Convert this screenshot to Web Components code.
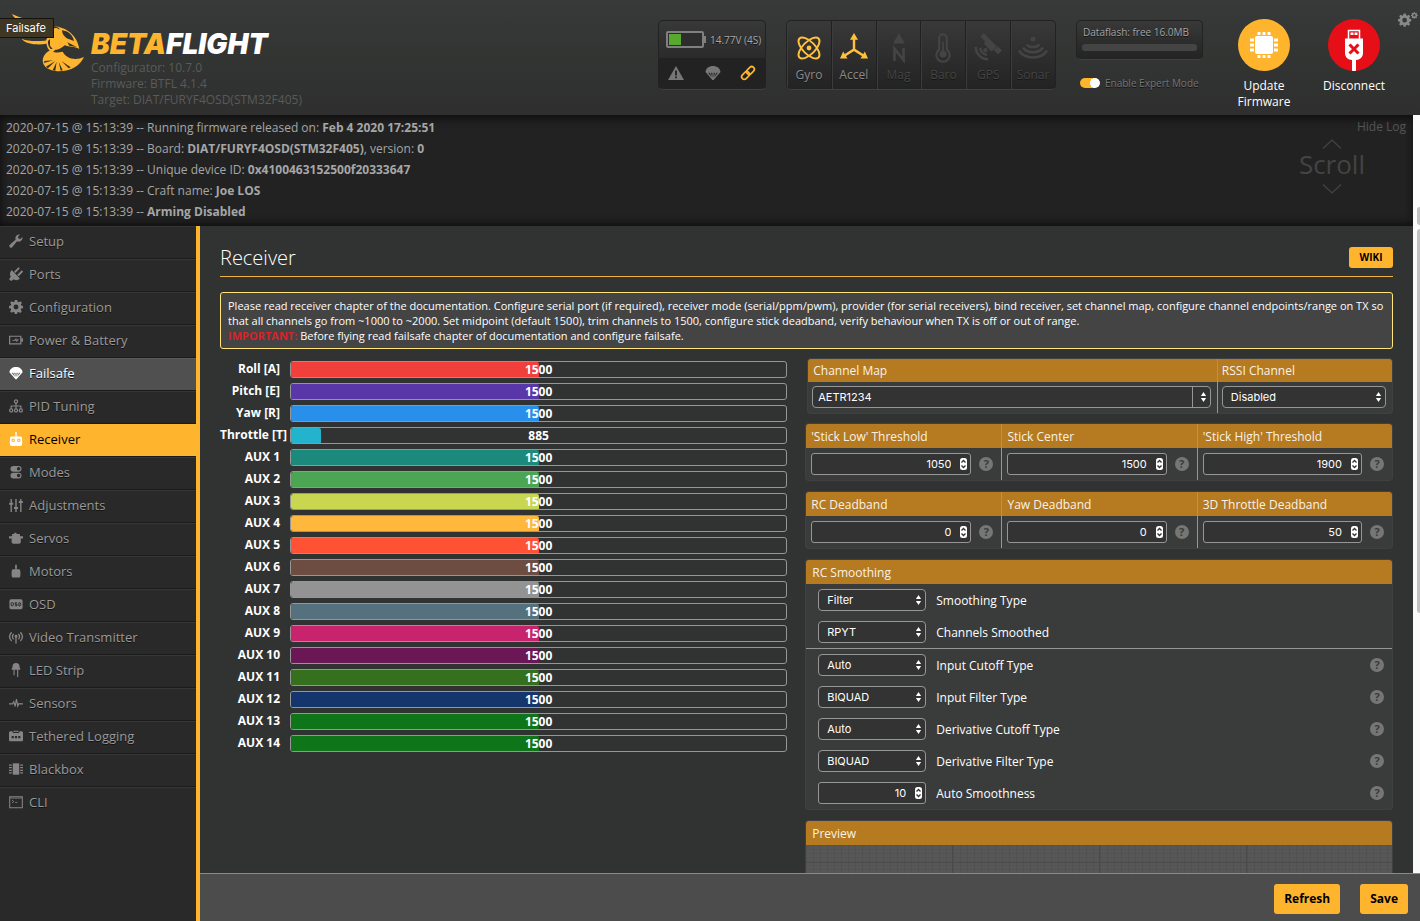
<!DOCTYPE html>
<html lang="en">
<head>
<meta charset="utf-8">
<title>Betaflight Configurator</title>
<style>
  html, body { margin: 0; height: 100%; }
  body {
    font-family: "Open Sans", "Liberation Sans", sans-serif;
    font-size: 12px;
    color: #fff;
    background: #313332;
    overflow: hidden;
    --accent: #ffb42e;
    --line: #969696;
  }
</style>
</head>
<body>
<bf-app>
  <bf-header slot="header"></bf-header>

  <bf-log slot="log">
    <p>2020-07-15 @ 15:13:39 -- Running firmware released on: <b>Feb 4 2020 17:25:51</b></p>
    <p>2020-07-15 @ 15:13:39 -- Board: <b>DIAT/FURYF4OSD(STM32F405)</b>, version: <b>0</b></p>
    <p>2020-07-15 @ 15:13:39 -- Unique device ID: <b>0x4100463152500f20333647</b></p>
    <p>2020-07-15 @ 15:13:39 -- Craft name: <b>Joe LOS</b></p>
    <p>2020-07-15 @ 15:13:39 -- <b>Arming Disabled</b></p>
  </bf-log>

  <bf-tabs slot="tabs" id="tabs"></bf-tabs>

  <bf-page slot="content" heading="Receiver">
    <bf-note slot="note">
      Please read receiver chapter of the documentation. Configure serial port (if required), receiver mode (serial/ppm/pwm), provider (for serial receivers), bind receiver, set channel map, configure channel endpoints/range on TX so that all channels go from ~1000 to ~2000. Set midpoint (default 1500), trim channels to 1500, configure stick deadband, verify behaviour when TX is off or out of range.<br>
      <b>IMPORTANT:</b> Before flying read failsafe chapter of documentation and configure failsafe.
    </bf-note>

    <div slot="left" id="channels"></div>

    <bf-panel slot="right" columns="7fr 3fr" class="map">
      <bf-cell heading="Channel Map" kind="combo" value="AETR1234"></bf-cell>
      <bf-cell heading="RSSI Channel" kind="select" value="Disabled"></bf-cell>
    </bf-panel>
    <bf-panel slot="right" columns="1fr 1fr 1fr">
      <bf-cell heading="'Stick Low' Threshold" kind="number" value="1050" help></bf-cell>
      <bf-cell heading="Stick Center" kind="number" value="1500" help></bf-cell>
      <bf-cell heading="'Stick High' Threshold" kind="number" value="1900" help></bf-cell>
    </bf-panel>
    <bf-panel slot="right" columns="1fr 1fr 1fr">
      <bf-cell heading="RC Deadband" kind="number" value="0" help></bf-cell>
      <bf-cell heading="Yaw Deadband" kind="number" value="0" help></bf-cell>
      <bf-cell heading="3D Throttle Deadband" kind="number" value="50" help></bf-cell>
    </bf-panel>
    <bf-panel slot="right" heading="RC Smoothing">
      <bf-setting kind="select" value="Filter" label="Smoothing Type"></bf-setting>
      <bf-setting kind="select" value="RPYT" label="Channels Smoothed"></bf-setting>
      <bf-setting kind="select" value="Auto" label="Input Cutoff Type" help divided></bf-setting>
      <bf-setting kind="select" value="BIQUAD" label="Input Filter Type" help></bf-setting>
      <bf-setting kind="select" value="Auto" label="Derivative Cutoff Type" help></bf-setting>
      <bf-setting kind="select" value="BIQUAD" label="Derivative Filter Type" help></bf-setting>
      <bf-setting kind="number" value="10" label="Auto Smoothness" help></bf-setting>
    </bf-panel>
    <bf-panel slot="right" heading="Preview">
      <bf-preview></bf-preview>
    </bf-panel>
  </bf-page>

  <bf-scrollbar slot="scroll"></bf-scrollbar>

  <bf-toolbar slot="toolbar">
    <bf-button>Refresh</bf-button>
    <bf-button>Save</bf-button>
  </bf-toolbar>

  <bf-tooltip slot="tooltip">Failsafe</bf-tooltip>
</bf-app>

<script>
// 16x16 icons, drawn in currentColor
const icons = {
  wrench: '<path fill="currentColor" d="M15.400 3.200a4.600 4.600 0 0 1-6.200 5.200L3.600 15a1.900 1.900 0 0 1-2.700-2.700L7.500 6.700A4.600 4.600 0 0 1 12.700.6L10.300 3l.5 2.200 2.200.5z"/>',
  plug: '<path fill="currentColor" d="M3 3.500l9.500 9.500-2 1.500c-1.500.9-3.600.7-5-.4l-3 2L0 14l2-3C.9 9.500.9 7.500 1.500 6z"/><path stroke="currentColor" stroke-width="2.200" stroke-linecap="round" d="M7 5.500L11 1.500M10.800 9.200L14.800 5.200"/>',
  gear: '<path fill="currentColor" fill-rule="evenodd" d="M6.700 0h2.600l.5 2.100 1.300.6L13 1.500 14.700 3.300 13.500 5.100l.5 1.300 2 .4v2.500l-2 .5-.6 1.300 1.200 1.900-1.800 1.800-1.900-1.200-1.300.5L9.300 16H6.700l-.5-2-1.300-.5L3 14.700 1.300 13l1.200-1.900L2 9.800 0 9.300V6.800l2-.4.6-1.300L1.400 3.200 3.100 1.500 5 2.700l1.200-.6zM8 5.200a2.800 2.800 0 1 0 0 5.600 2.800 2.800 0 0 0 0-5.600z"/>',
  battery: '<path fill="none" stroke="currentColor" stroke-width="1.400" d="M.7 3.700h12.800v8.600H.7z"/><path fill="currentColor" d="M14 6h2v4h-2zM3 8.500l3-.5 2.500-2.500-.3 2L11.500 7 8.500 10.500l-.2-2L5 9z"/>',
  parachute: '<path fill="currentColor" fill-rule="evenodd" d="M.5 7C.8 3.300 4 1 8 1s7.200 2.300 7.500 6L8.600 15H7.400zM3.300 8l3.500 4.500L4.900 8C4.500 7.600 3.700 7.600 3.300 8zM6 8l1.400 4.500V8C7 7.500 6.400 7.500 6 8zM8.600 8v4.500L10 8c-.4-.5-1-.5-1.400 0zM11.200 8l-2 4.500L12.700 8c-.4-.4-1.100-.4-1.500 0z"/>',
  tree: '<g fill="none" stroke="currentColor" stroke-width="1.400"><circle cx="8" cy="2.800" r="1.800"/><circle cx="2.500" cy="13" r="1.800"/><circle cx="8" cy="13" r="1.800"/><circle cx="13.500" cy="13" r="1.800"/><path d="M8 4.600v6.600M2.500 11.200V8h11v3.200"/></g>',
  receiver: '<path fill="currentColor" fill-rule="evenodd" d="M7.200 0h1.600v5H13a2 2 0 0 1 2 2v7a2 2 0 0 1-2 2H3a2 2 0 0 1-2-2V7a2 2 0 0 1 2-2h4.200zM4.800 7.500a2 2 0 1 0 0 4 2 2 0 0 0 0-4zm6.400 0a2 2 0 1 0 0 4 2 2 0 0 0 0-4z"/><circle cx="4.800" cy="9.500" r=".9" fill="currentColor"/><circle cx="11.200" cy="9.500" r=".9" fill="currentColor"/>',
  modes: '<path fill="currentColor" fill-rule="evenodd" d="M5 1h6a3.300 3.300 0 0 1 0 6.600H5A3.300 3.300 0 0 1 5 1zm6 1.300a2 2 0 1 0 0 4 2 2 0 0 0 0-4zM5 8.800h6a3.300 3.300 0 0 1 0 6.600H5a3.300 3.300 0 0 1 0-6.600zm6 1.300a2 2 0 1 0 0 4 2 2 0 0 0 0-4z"/>',
  sliders: '<path stroke="currentColor" stroke-width="1.600" d="M2.500 1v15M8 1v15M13.500 1v15"/><path stroke="currentColor" stroke-width="2.200" d="M.2 6.500h4.600M5.700 11.500h4.600M11.200 4.500h4.600"/>',
  servo: '<path fill="currentColor" d="M3.500 3.500h2.200L6.300 2h2l.6 1.500h3.600V6H16v2.500h-2.500V13L12 14.500H4.500L3 13V8.500H0V6h3.500z"/>',
  motor: '<path fill="currentColor" d="M8 0c1 1.500 1.500 3 .8 4.800V6H12l1 2v6l-1 1.500H4L3 14V8l1-2h3.200V4.800C6.500 3 7 1.500 8 0z"/>',
  osd: '<rect x=".5" y="2.500" width="15" height="11.500" rx="2" fill="currentColor"/><g fill="none" stroke="#292929" stroke-width="1.100"><rect x="2.400" y="6.500" width="2.600" height="3.600" rx="1"/><path d="M9.200 6.600H7v1.700h2.200v1.800H6.800M11.300 6.500v3.700h1c1.500 0 1.500-3.700 0-3.700z"/></g>',
  antenna: '<g fill="none" stroke="currentColor" stroke-width="1.500"><path d="M3 2.500C.2 5.500.2 9.500 3 12.500M13 2.500c2.800 3 2.800 7 0 10M5.300 4.500C3.600 6.300 3.600 8.700 5.300 10.500M10.700 4.500c1.700 1.800 1.700 4.200 0 6M8 8v7.500"/></g><circle cx="8" cy="7" r="1.600" fill="currentColor"/>',
  led: '<path fill="currentColor" d="M4 5.500V4a4 4 0 0 1 8 0v1.500h.8v2.200H3.200V5.500z"/><path stroke="currentColor" stroke-width="1.300" d="M5.800 7.500v6.500M9.900 7.500V16"/>',
  pulse: '<path fill="none" stroke="currentColor" stroke-width="1.300" d="M0 9h4l1.500-2.500L7 12 8.500 3.500 10 11.500 11.300 8.500 12.500 9H16"/>',
  logger: '<path fill="currentColor" fill-rule="evenodd" d="M1 2.500h2.500l1.500 2h6l1.500-2H15l1 1.500v9l-1 1H1l-1-1V4zM3 8v2.500h2.500V8zm3.800 0v2.500h2.400V8zm3.700 0v2.500H13V8z"/><path fill="currentColor" d="M5 2h6v1.300H5z"/>',
  chip: '<path fill="currentColor" d="M4.300 1.500h7.400v13H4.300z"/><path stroke="currentColor" stroke-width="1.300" d="M0 3.500h3.200M0 6.500h3.200M0 9.500h3.200M0 12.500h3.200M12.800 3.500H16M12.800 6.500H16M12.800 9.500H16M12.800 12.500H16"/>',
  cli: '<path fill="none" stroke="currentColor" stroke-width="1.200" d="M.8 2h14.400v12.500H.8z"/><path stroke="currentColor" d="M1 3.500h14M7 8.500h2.500"/><path fill="none" stroke="currentColor" d="M3.500 6l2 1.500-2 1.500"/>',
  warning: '<path fill="currentColor" fill-rule="evenodd" d="M8 1l8 14H0zM7.100 5.500v5h1.800v-5zm0 6v1.800h1.800v-1.800z"/>',
  link: '<g fill="none" stroke="currentColor" stroke-width="1.900" transform="rotate(-45 8 8)"><rect x="-1" y="5" width="10" height="6" rx="3"/><rect x="7" y="5" width="10" height="6" rx="3"/></g>',
  gyro: '<g fill="none" stroke="currentColor" stroke-width="1.200"><ellipse cx="8" cy="8" rx="8.300" ry="3.800" transform="rotate(45 8 8)"/><ellipse cx="8" cy="8" rx="8.300" ry="3.800" transform="rotate(-45 8 8)"/></g><circle cx="8" cy="8" r="1.500" fill="currentColor"/>',
  accel: '<path fill="none" stroke="currentColor" stroke-width="1.400" d="M8 3v6.500L2.500 13M8 9.500l5.500 3.500"/><path fill="currentColor" d="M8 0l2.300 3.800H5.700zM0 14.500l1.800-4 2.500 4zM16 14.500l-1.800-4-2.500 4z"/>',
  mag: '<path fill="currentColor" d="M8 0l3.400 6H4.600z"/><path fill="none" stroke="currentColor" stroke-width="1.500" d="M5.400 16V9l5.200 6.500v-7"/>',
  baro: '<path fill="none" stroke="currentColor" stroke-width="1.200" d="M5.800 9.500V3a2.200 2.200 0 0 1 4.400 0v6.500a3.800 3.800 0 1 1-4.400 0z"/><circle cx="8" cy="12" r="2" fill="currentColor"/><path stroke="currentColor" d="M8 5v7"/>',
  gps: '<path fill="currentColor" d="M5.500 0l3.200 3.200-2 2L3.500 2zM8.500 3l4.500 4.500-3 3L5.500 6zM13.500 7.500l2.500 2.500-2.200 2.200-2.600-2.500z"/><path fill="none" stroke="currentColor" stroke-width="1.400" d="M1 8a7 7 0 0 0 7 7M3.500 8.500a4.500 4.500 0 0 0 4 4"/><circle cx="6.500" cy="9.800" r="1.200" fill="currentColor"/>',
  sonar: '<circle cx="8" cy="3.500" r="1.400" fill="currentColor"/><path fill="none" stroke="currentColor" stroke-width="1.500" d="M4.500 6.500c1 2 6 2 7 0M2.300 8.300c2.200 3.600 9.200 3.600 11.400 0M0 10c3.500 5.300 12.500 5.300 16 0"/>',
};

function define(name, html, setup) {
  const template = document.createElement("template");
  template.innerHTML = html;
  customElements.define(name, class extends HTMLElement {
    constructor() {
      super();
      this.attachShadow({ mode: "open" });
    }
    connectedCallback() {
      if (this.shadowRoot.firstChild) return;
      this.shadowRoot.appendChild(template.content.cloneNode(true));
      if (setup) setup(this, this.shadowRoot);
    }
  });
}

define("bf-icon", `
<style>
  :host { display: block; width: 14px; height: 14px; flex: none; }
  svg { display: block; width: 100%; height: 100%; overflow: visible; }
</style>
<svg viewBox="0 0 16 16" aria-hidden="true"></svg>
`, (el, root) => {
  root.querySelector("svg").innerHTML = icons[el.getAttribute("name")];
});

define("bf-app", `
<style>
  :host {
    display: grid;
    position: relative;
    height: 100vh;
    grid-template-columns: 200px minmax(0, 1fr) 7px;
    grid-template-rows: auto auto minmax(0, 1fr) auto;
    grid-template-areas:
      "header header header"
      "log log scroll"
      "tabs content scroll"
      "tabs toolbar toolbar";
  }
  slot[name=header]::slotted(*) { grid-area: header; }
  slot[name=log]::slotted(*) { grid-area: log; }
  slot[name=tabs]::slotted(*) { grid-area: tabs; }
  slot[name=content]::slotted(*) { grid-area: content; }
  slot[name=scroll]::slotted(*) { grid-area: scroll; }
  slot[name=toolbar]::slotted(*) { grid-area: toolbar; }
</style>
<slot name="header"></slot>
<slot name="log"></slot>
<slot name="tabs"></slot>
<slot name="content"></slot>
<slot name="scroll"></slot>
<slot name="toolbar"></slot>
<slot name="tooltip"></slot>
`);

define("bf-tooltip", `
<style>
  :host {
    position: absolute;
    left: 0;
    top: 18px;
    padding: 0 7px 0 6px;
    border: 1px solid #15140f;
    border-left: 0;
    background: #3f3624;
    font: 11px/18px Inter, "Liberation Sans", sans-serif;
    color: #fff;
  }
</style>
<slot></slot>
`);

define("bf-logo", `
<style>
  :host { display: flex; padding: 13px 0 0 10px; gap: 6px; }
  svg { width: 75px; height: 60px; flex: none; }
  .brand {
    font: italic 900 28px/24px Inter, "Liberation Sans", sans-serif;
    padding-top: 19px;
    color: #fff;
  }
  .brand b { font-weight: inherit; color: var(--accent); }
  .info { color: #5a5a5a; line-height: 16px; padding-top: 4px; white-space: nowrap; }
</style>
<svg viewBox="30 40 225 180" aria-hidden="true">
  <g fill="#ffb42e">
    <path d="M36 43C60 55 90 62 120 70C145 78 160 90 166 106L158 112C145 90 125 80 95 74C65 68 42 58 36 43z"/>
    <path d="M65 117C85 126 110 124 135 123C147 121 153 118 160 116L164 124C150 131 130 135 108 134C88 133 72 127 65 117z"/>
    <path d="M138 122C142 112 150 104 160 102L158 88C165 84 172 84 178 90C180 84 170 82 160 80C200 82 232 108 238 148C224 140 208 142 194 137C184 145 176 152 166 150L158 158C148 156 140 146 138 122z"/>
    <path d="M152 152C160 162 176 158 188 156C198 176 226 184 252 172C240 198 214 216 172 215C140 212 124 196 129 176C132 166 140 156 152 152z"/>
  </g>
  <g fill="#303231">
    <path d="M186 92C204 94 218 106 222 124L200 116C192 110 186 102 186 92z"/>
    <path d="M202 128L230 142L208 138z"/>
    <path d="M134 184L160 182L131 190zM138 201L166 184L144 206zM158 212L170 186L166 213zM182 213L176 186L188 212zM206 206L184 184L212 203z"/>
    <path d="M144 124L150 118L150 138L158 148L152 148C146 142 143 134 144 124z"/>
  </g>
</svg>
<div>
  <div class="brand"><b>BETA</b>FLIGHT</div>
  <div class="info">Configurator: 10.7.0<br>Firmware: BTFL 4.1.4<br>Target: DIAT/FURYF4OSD(STM32F405)</div>
</div>
`);

define("bf-battery", `
<style>
  :host {
    display: block;
    box-sizing: border-box;
    width: 108px;
    height: 70px;
    border: 1px solid #222;
    border-bottom-color: #3f4140;
    border-radius: 5px;
    background: linear-gradient(#373837, #2b2b2b 37px, #222 37px);
    overflow: hidden;
  }
  .volts { display: flex; align-items: center; height: 37px; padding-left: 7px; gap: 4px; font-size: 10px; color: #a9a9a9; white-space: nowrap; text-shadow: 0 1px #111; }
  .volts svg { width: 40px; height: 17px; flex: none; }
  .status { display: flex; justify-content: space-between; align-items: center; height: 29px; padding: 0 10px 0 9px; color: #777; }
  bf-icon { width: 16px; height: 16px; }
  .on { color: var(--accent); width: 14px; height: 14px; }
</style>
<div class="volts">
  <svg viewBox="0 0 40 17" aria-hidden="true">
    <rect x="1" y="1" width="36" height="15" rx="1" fill="#2d2d2d" stroke="#808080" stroke-width="2"/>
    <path d="M37 5h3v7h-3z" fill="#808080"/><path d="M3 3h12v11H3z" fill="#57aa2e"/>
  </svg>
  <span>14.77V (4S)</span>
</div>
<div class="status">
  <bf-icon name="warning"></bf-icon>
  <bf-icon name="parachute"></bf-icon>
  <bf-icon name="link" class="on"></bf-icon>
</div>
`);

define("bf-sensor", `
<style>
  :host {
    display: flex;
    flex: 1;
    flex-direction: column;
    align-items: center;
    box-sizing: border-box;
    padding-top: 12px;
    border-right: 1px solid #202020;
    box-shadow: inset 1px 0 #3c3c3c;
    color: #444;
    text-shadow: 0 1px #151515;
  }
  :host(:last-of-type) { border-right: 0; }
  bf-icon { width: 28px; height: 28px; margin-bottom: 5px; }
  span { line-height: 18px; }
  :host([on]) bf-icon { color: #ffc13c; }
  :host([icon=gyro]) bf-icon { width: 26px; margin: 1px 0 4px; }
  :host([on]) span { color: #8b8b8b; }
</style>
<span><slot></slot></span>
`, (el, root) => {
  root.querySelector("span").insertAdjacentHTML("beforebegin", `<bf-icon name="${el.getAttribute("icon")}"></bf-icon>`);
});

define("bf-sensors", `
<style>
  :host {
    display: flex;
    box-sizing: border-box;
    width: 270px;
    height: 70px;
    border: 1px solid #222;
    border-bottom-color: #3f4140;
    border-radius: 5px;
    background: linear-gradient(#383938, #232323);
    overflow: hidden;
  }
</style>
<bf-sensor icon="gyro" on>Gyro</bf-sensor>
<bf-sensor icon="accel" on>Accel</bf-sensor>
<bf-sensor icon="mag">Mag</bf-sensor>
<bf-sensor icon="baro">Baro</bf-sensor>
<bf-sensor icon="gps">GPS</bf-sensor>
<bf-sensor icon="sonar">Sonar</bf-sensor>
`);

define("bf-dataflash", `
<style>
  :host { display: block; width: 127px; font-size: 10px; }
  .box {
    box-sizing: border-box;
    height: 40px;
    padding: 3px 5px;
    border: 1px solid #222;
    border-bottom-color: #3f4140;
    border-radius: 5px;
    background: linear-gradient(#383938, #232323);
    line-height: 17px;
    color: #a5a5a5;
    text-shadow: 0 1px #111;
    white-space: nowrap;
  }
  .box div { padding: 0 1px; }
  .box i { display: block; height: 7px; margin-top: 3px; border-radius: 3px; background: #444; }
  label { display: flex; align-items: center; gap: 5px; padding: 16px 0 0 4px; line-height: 14px; color: #777; white-space: nowrap; text-shadow: 0 1px #111; }
  input {
    appearance: none;
    box-sizing: border-box;
    width: 20px;
    height: 10px;
    margin: 0;
    padding: 0;
    border-radius: 5px;
    background: radial-gradient(circle at 15px 5px, #fff 5px, var(--accent) 5px);
  }
</style>
<div class="box"><div>Dataflash: free 16.0MB</div><i></i></div>
<label><input type="checkbox" checked>Enable Expert Mode</label>
`);

define("bf-connect", `
<style>
  :host { display: flex; }
  button {
    display: flex;
    flex-direction: column;
    align-items: center;
    width: 90px;
    margin: 0;
    padding: 0;
    border: 0;
    background: none;
    font: inherit;
    line-height: 16px;
    color: #fff;
  }
  svg { width: 52px; height: 52px; border-radius: 50%; margin-bottom: 7px; background: #ffb42e; }
  .off svg { background: #e60f18; }
</style>
<button type="button">
  <svg viewBox="0 0 52 52" aria-hidden="true">
    <rect x="17" y="17" width="18" height="18" rx="2" fill="#fff"/>
    <path stroke="#fff" stroke-width="3" d="M21 13v3M26 13v3M31 13v3M21 36v3M26 36v3M31 36v3M12 21h4M12 26h4M12 31h4M36 21h4M36 26h4M36 31h4"/>
  </svg>
  Update<br>Firmware
</button>
<button type="button" class="off">
  <svg viewBox="0 0 52 52" aria-hidden="true">
    <path fill="none" stroke="#fff" stroke-width="1.500" d="M20.500 20v-8.500h11V20"/>
    <path fill="#fff" d="M22.500 13.500h3v2.500h-3zM26.500 13.500h3v2.500h-3zM17 19.500h18V34c0 4-3 7-7 7v11h-4V41c-4 0-7-3-7-7z"/>
    <path stroke="#e60f18" stroke-width="3" d="M21.500 25.500l9 9M30.500 25.500l-9 9"/>
  </svg>
  Disconnect
</button>
`);

define("bf-header", `
<style>
  :host {
    display: flex;
    min-height: 115px;
    background: linear-gradient(#373a38, #2e2f2e);
  }
  .right { display: flex; align-items: flex-start; gap: 20px; margin-left: auto; padding: 20px 2px 0 0; }
  bf-connect { margin: -1px 1px 0 -4px; }
  .cogs { margin: -8px 0 0 -22px; padding: 0; border: 0; background: none; color: #888; }
  .cogs svg { display: block; width: 20px; height: 15px; }
</style>
<bf-logo></bf-logo>
<div class="right">
  <bf-battery></bf-battery>
  <bf-sensors></bf-sensors>
  <bf-dataflash></bf-dataflash>
  <bf-connect></bf-connect>
  <button class="cogs" type="button" aria-label="Options">
    <svg viewBox="0 0 20 15">
      <g transform="translate(0 1.500) scale(.83)">${icons.gear}</g>
      <g transform="translate(13 0) scale(.42)">${icons.gear}</g>
    </svg>
  </button>
</div>
`);

define("bf-log", `
<style>
  :host {
    display: flex;
    justify-content: space-between;
    padding: 2px 7px 4px 6px;
    background: #222;
    box-shadow: inset 0 5px 8px -2px #0d0d0d, inset 0 -5px 8px -3px #0d0d0d;
    line-height: 21px;
    color: #a6a6a6;
  }
  ::slotted(p) { margin: 0; }
  .side { display: flex; flex-direction: column; align-items: flex-end; color: #555; }
  .side a { color: inherit; text-decoration: none; line-height: 19px; }
  .scroll { display: flex; flex-direction: column; align-items: center; margin-right: 41px; color: #444; font-size: 26px; line-height: 30px; }
  .scroll svg { width: 20px; height: 10px; margin-top: 3px; }
  .scroll svg:last-child { margin-top: 5px; }
</style>
<div><slot></slot></div>
<div class="side">
  <a href="#">Hide Log</a>
  <div class="scroll">
    <svg viewBox="0 0 20 10"><path d="M1 9.500l9-8.500 9 8.500" fill="none" stroke="#444" stroke-width="1.200"/></svg>
    <span>Scroll</span>
    <svg viewBox="0 0 20 10"><path d="M1 .5L10 9 19 .5" fill="none" stroke="#444" stroke-width="1.200"/></svg>
  </div>
</div>
`);

define("bf-tabs", `
<style>
  :host { display: block; background: #292929; border-right: 4px solid var(--accent); }
</style>
<nav><slot></slot></nav>
`);

define("bf-tab", `
<style>
  :host { display: block; }
  a {
    display: flex;
    align-items: center;
    gap: 6px;
    height: 28px;
    padding: 0 0 3px 9px;
    border-top: 1px solid #363636;
    border-bottom: 1px solid #1b1b1b;
    font-size: 13px;
    line-height: 18px;
    color: #999;
    text-decoration: none;
    text-shadow: 0 1px #111;
  }
  bf-icon { color: #858585; }
  :host([hover]) a { background: #505050; border-top-color: #5a5a5a; color: #fff; }
  :host([active]) a { background: var(--accent); border-top-color: var(--accent); color: #000; text-shadow: none; }
  :host([hover]) bf-icon, :host([active]) bf-icon { color: #fff; }
  :host(:last-child) a { border-bottom: 0; }
</style>
<a href="#"><span><slot></slot></span></a>
`, (el, root) => {
  root.querySelector("a").insertAdjacentHTML("afterbegin", `<bf-icon name="${el.getAttribute("icon")}"></bf-icon>`);
});

define("bf-page", `
<style>
  :host { display: block; padding: 20px 20px 0; overflow: hidden; background: #313332; }
  header {
    display: flex;
    justify-content: space-between;
    align-items: flex-start;
    height: 30px;
    border-bottom: 1px solid #f0b23f;
    margin-bottom: 15px;
  }
  h1 { margin: 0; font-size: 20px; line-height: 24px; font-weight: 300; }
  header a {
    min-width: 24px;
    padding: 0 10px;
    margin-top: 1px;
    border-radius: 3px;
    background: var(--accent);
    color: #000;
    font-size: 10px;
    line-height: 21px;
    font-weight: 700;
    text-align: center;
    text-decoration: none;
  }
  .columns { display: grid; grid-template-columns: minmax(0, 29fr) minmax(0, 30fr); gap: 19px; margin-top: 10px; }
  .left { padding-top: 2px; }
  .right { display: flex; flex-direction: column; gap: 12px; padding-right: 1px; }
  ::slotted(.map) { margin: 0 0 -1px 2px; }
</style>
<header><h1></h1><a href="#">WIKI</a></header>
<slot name="note"></slot>
<div class="columns">
  <div class="left"><slot name="left"></slot></div>
  <div class="right"><slot name="right"></slot></div>
</div>
`, (el, root) => {
  root.querySelector("h1").textContent = el.getAttribute("heading");
});

define("bf-note", `
<style>
  :host {
    display: block;
    padding: 5px 7px;
    border: 1px solid #ffe57a;
    border-radius: 3px;
    background: #434443;
    font-size: 11px;
    line-height: 15px;
  }
  ::slotted(b) { color: #d8232a; }
</style>
<slot></slot>
`);

define("bf-channel", `
<style>
  :host { display: grid; grid-template-columns: 70px minmax(0, 1fr); height: 22px; font-weight: 700; }
  label { padding-right: 10px; text-align: right; line-height: 16px; white-space: nowrap; }
  label.long { padding: 0; text-align: left; }
  .track {
    display: grid;
    box-sizing: border-box;
    height: 17px;
    border: 1px solid var(--line);
    border-radius: 3px;
    overflow: hidden;
  }
  .fill { grid-area: 1 / 1; border-radius: 2px; }
  .value { grid-area: 1 / 1; text-align: center; line-height: 16px; }
</style>
<label></label>
<div class="track"><div class="fill"></div><div class="value"></div></div>
`, (el, root) => {
  const value = Number(el.getAttribute("value"));
  const label = root.querySelector("label");
  const fill = root.querySelector(".fill");
  label.textContent = el.getAttribute("label");
  if (label.textContent.length > 10) label.className = "long";
  // bars run from 800 to 2200
  fill.style.width = (value - 800) / 14 + "%";
  fill.style.background = el.getAttribute("color");
  root.querySelector(".value").textContent = value;
});

define("bf-panel", `
<style>
  :host {
    display: block;
    border-radius: 3px;
    background: #3a3c3b;
    box-shadow: 0 0 0 1px #3f403f;
    overflow: hidden;
  }
  h2 { margin: 0; padding: 1px 0 0 6px; background: #b67a20; font-size: 12px; line-height: 23px; font-weight: 400; color: #f8f2e8; }
  .body { display: grid; }
</style>
<h2 hidden></h2>
<div class="body"><slot></slot></div>
`, (el, root) => {
  const h2 = root.querySelector("h2");
  if (el.hasAttribute("heading")) {
    h2.textContent = el.getAttribute("heading");
    h2.hidden = false;
  }
  root.querySelector(".body").style.gridTemplateColumns = el.getAttribute("columns") || "minmax(0, 1fr)";
});

// shared by every element that holds an input or a select
const controlStyle = `
  .control { display: grid; align-items: center; height: 22px; }
  .control > * { grid-area: 1 / 1; }
  input, select {
    appearance: none;
    box-sizing: border-box;
    width: 100%;
    height: 22px;
    margin: 0;
    padding: 0 8px;
    border: 1px solid var(--line);
    border-radius: 4px;
    background: #333;
    font: 11px Inter, "Liberation Sans", sans-serif;
    color: #fff;
  }
  input[type=number] { appearance: textfield; padding-right: 19px; text-align: right; border-radius: 3px; }
  input::-webkit-inner-spin-button { appearance: none; margin: 0; }
  .combo input { padding: 0 5px; }
  .arrows { justify-self: end; width: 7px; height: 12px; margin-right: 4px; pointer-events: none; }
  .combo .arrows { box-sizing: content-box; height: 12px; padding: 4px 0 4px 7px; border-left: 1px solid var(--line); }
  .help {
    width: 14px;
    height: 14px;
    flex: none;
    margin: 0;
    padding: 0;
    border: 0;
    border-radius: 50%;
    background: #757675;
    color: #3a3c3b;
    font: 700 11px/14px "Open Sans", sans-serif;
    text-align: center;
  }
`;

const arrows = '<svg class="arrows" viewBox="0 0 7 12"><path fill="#fff" d="M3.500 1l2.600 4H.9zM3.500 11L.9 7h5.200z"/></svg>';
const spinner = '<svg class="arrows" viewBox="0 0 7 12"><rect width="7" height="12" rx="2.500" fill="#fff"/><path fill="none" stroke="#333" stroke-width="1.300" d="M1.500 4.500l2-2 2 2M1.500 7.500l2 2 2-2"/></svg>';

function control(el) {
  const kind = el.getAttribute("kind");
  const value = el.getAttribute("value");
  if (kind === "select") {
    return `<div class="control"><select id="field"><option>${value}</option></select>${arrows}</div>`;
  }
  if (kind === "combo") {
    return `<div class="control combo"><input id="field" type="text" value="${value}">${arrows}</div>`;
  }
  return `<div class="control"><input id="field" type="number" value="${value}">${spinner}</div>`;
}

define("bf-cell", `
<style>
  ${controlStyle}
  :host { display: block; }
  :host(:not(:first-child)) { border-left: 1px solid var(--line); }
  label { display: block; padding: 1px 0 0 5px; background: #b67a20; line-height: 23px; color: #f8f2e8; white-space: nowrap; }
  :host([kind=combo]) label, :host([kind=select]) label { line-height: 22px; }
  :host([kind=select]) label { padding-left: 4px; }
  .row { display: flex; align-items: center; gap: 8px; padding: 5px 8px 5px 5px; }
  :host([kind=combo]) .row, :host([kind=select]) .row { padding: 4px 6px 5px 4px; }
  .control { flex: 1; }
</style>
<label for="field"></label>
<div class="row"></div>
`, (el, root) => {
  root.querySelector("label").textContent = el.getAttribute("heading");
  root.querySelector(".row").innerHTML = control(el) +
    (el.hasAttribute("help") ? '<button class="help" type="button">?</button>' : "");
});

define("bf-setting", `
<style>
  ${controlStyle}
  :host { display: flex; align-items: center; height: 32px; padding: 0 8px 0 12px; }
  :host([divided]) { border-top: 1px solid var(--line); }
  .control { width: 108px; }
  label { flex: 1; padding-left: 10px; }
</style>
`, (el, root) => {
  root.innerHTML += control(el) + `<label for="field">${el.getAttribute("label")}</label>` +
    (el.hasAttribute("help") ? '<button class="help" type="button">?</button>' : "");
});

define("bf-preview", `
<style>
  :host {
    display: block;
    height: 180px;
    background:
      repeating-linear-gradient(90deg, transparent 0 146px, #4a4a4a 146px 147px),
      repeating-linear-gradient(transparent 0 17px, #4c4c4c 17px 18px, transparent 18px 73px),
      repeating-linear-gradient(90deg, rgba(0, 0, 0, .06) 0 1px, transparent 1px 7px),
      repeating-linear-gradient(rgba(0, 0, 0, .04) 0 1px, transparent 1px 4px),
      #575757;
  }
</style>
`);

define("bf-scrollbar", `
<style>
  :host { display: flex; flex-direction: column; gap: 4px; background: #fafafa; padding: 92px 0 0 4px; }
  i { display: block; height: 18px; border-radius: 3px 0 0 3px; background: #c1c1c1; }
  i + i { height: 384px; }
</style>
<i></i><i></i>
`);

define("bf-toolbar", `
<style>
  :host {
    display: flex;
    justify-content: flex-end;
    gap: 20px;
    padding: 10px 12px 7px;
    border-top: 1px solid #8a8a8a;
    background: #4b4c4b;
  }
</style>
<slot></slot>
`);

define("bf-button", `
<style>
  :host { display: block; }
  button {
    display: block;
    margin: 0;
    padding: 0 10px;
    border: 0;
    border-radius: 3px;
    background: var(--accent);
    font: inherit;
    font-weight: 700;
    line-height: 30px;
    color: #000;
  }
</style>
<button type="button"><slot></slot></button>
`);

const tabData = [
  ["wrench", "Setup"],
  ["plug", "Ports"],
  ["gear", "Configuration"],
  ["battery", "Power & Battery"],
  ["parachute", "Failsafe", "hover"],
  ["tree", "PID Tuning"],
  ["receiver", "Receiver", "active"],
  ["modes", "Modes"],
  ["sliders", "Adjustments"],
  ["servo", "Servos"],
  ["motor", "Motors"],
  ["osd", "OSD"],
  ["antenna", "Video Transmitter"],
  ["led", "LED Strip"],
  ["pulse", "Sensors"],
  ["logger", "Tethered Logging"],
  ["chip", "Blackbox"],
  ["cli", "CLI"],
];
const tabs = document.querySelector("#tabs");

tabData.forEach(([icon, title, state]) => {
  const tab = document.createElement("bf-tab");
  tab.setAttribute("icon", icon);
  if (state) tab.setAttribute(state, "");
  tab.textContent = title;
  tabs.appendChild(tab);
});

const channelData = [
  ["Roll [A]", 1500, "#f1403c"],
  ["Pitch [E]", 1500, "#5a37a8"],
  ["Yaw [R]", 1500, "#288fea"],
  ["Throttle [T]", 885, "#23b3cc"],
  ["AUX 1", 1500, "#1b8a7c"],
  ["AUX 2", 1500, "#4ba553"],
  ["AUX 3", 1500, "#c8d650"],
  ["AUX 4", 1500, "#ffb83c"],
  ["AUX 5", 1500, "#ff5235"],
  ["AUX 6", 1500, "#6d4c41"],
  ["AUX 7", 1500, "#939393"],
  ["AUX 8", 1500, "#56717e"],
  ["AUX 9", 1500, "#c8246e"],
  ["AUX 10", 1500, "#6b1655"],
  ["AUX 11", 1500, "#35701f"],
  ["AUX 12", 1500, "#15366c"],
  ["AUX 13", 1500, "#0f7519"],
  ["AUX 14", 1500, "#0f7519"],
];
const channels = document.querySelector("#channels");

channelData.forEach(([label, value, color]) => {
  const channel = document.createElement("bf-channel");
  channel.setAttribute("label", label);
  channel.setAttribute("value", value);
  channel.setAttribute("color", color);
  channels.appendChild(channel);
});
</script>
</body>
</html>
